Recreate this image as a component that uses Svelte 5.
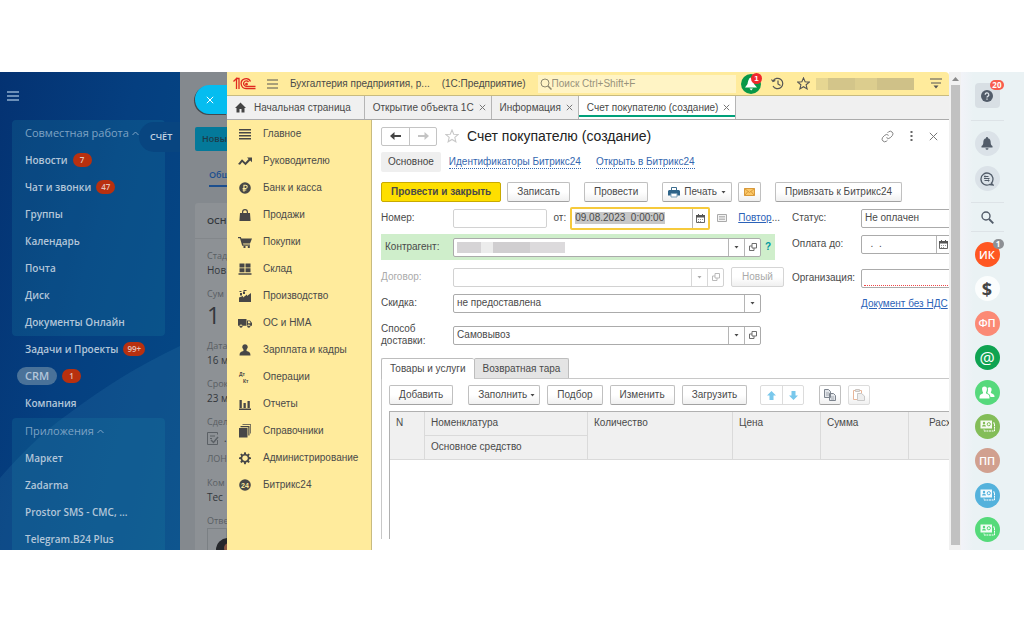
<script>
  const teamMenu = [
    { label: 'Новости', badge: '7' },
    { label: 'Чат и звонки', badge: '47' },
    { label: 'Группы' },
    { label: 'Календарь' },
    { label: 'Почта' },
    { label: 'Диск' },
    { label: 'Документы Онлайн' }
  ]

  const mainMenu = [
    { label: 'Задачи и Проекты', badge: '99+' },
    { label: 'CRM', badge: '1', active: true },
    { label: 'Компания' }
  ]

  const appsMenu = ['Маркет', 'Zadarma', 'Prostor SMS - СМС, ...', 'Telegram.B24 Plus']

  const sections = [
    { label: 'Главное', icon: 'M1 2h12v1.6H1zM1 5h12v1.6H1zM1 8h12v1.6H1zM1 11h12v1.6H1z' },
    { label: 'Руководителю', icon: 'M0 10 4 5.2 7.4 8.4 10.6 5 9 3.4H14V8.2L12.2 6.5 7.5 11.2 4.2 8 2 10.8Z' },
    { label: 'Банк и касса', icon: 'M7 1.2a5.8 5.8 0 1 0 0 11.6a5.8 5.8 0 1 0 0-11.6ZM5.4 3.8h2.3a2 2 0 0 1 0 4.1H6.5v.7h1.8v.9H6.5v1.2H5.4V9.5h-.8v-.9h.8v-.7h-.8V7h.8ZM6.5 4.8V7h1.1a1.1 1.1 0 0 0 0-2.2Z' },
    { label: 'Продажи', icon: 'M2 5h2V4a3 3 0 0 1 6 0v1h2l.6 8H1.4ZM5.2 5h3.6V4a1.8 1.8 0 0 0-3.6 0Z' },
    { label: 'Покупки', icon: 'M0 2h2.8l.6 1.5H14L12 8.5H5l.3 1H12v1.2H4.2L2 3.2H0ZM5.5 11h2v2h-2zM9.8 11h2v2h-2z' },
    { label: 'Склад', icon: 'M1.5 1.5h5v4h-5zM7.5 1.5h5v4h-5zM1.5 6.3h5v4h-5zM7.5 6.3h5v4h-5zM.5 11.2h13v1.6H.5z' },
    { label: 'Производство', icon: 'M1 13V8.5l4-1.5v1.5L9 5.5V7l4-3v9ZM2 4h2v2.5H2zM5 2.5h2V5H5zM1.5 2h2v1h-2zM5.5 1h3v1h-3z' },
    { label: 'ОС и НМА', icon: 'M0 3h8.5v6.8H0ZM9 4.5h3l2 2.5v2.8H9ZM10 5.3v1.9h2.7L11.6 5.3ZM3 8.6a1.6 1.6 0 1 0 .01 0ZM10.8 8.6a1.6 1.6 0 1 0 .01 0Z' },
    { label: 'Зарплата и кадры', icon: 'M7 1.2a2.8 2.8 0 0 1 1.7 5L8.5 8c2.5.6 4 1.5 4 4.5h-11c0-3 1.5-3.9 4-4.5l-.2-1.8A2.8 2.8 0 0 1 7 1.2Z' },
    { label: 'Операции', ledger: true },
    { label: 'Отчеты', icon: 'M1 11.5h12V13H1zM1.5 3h2.3v8H1.5zM5.5 6h2.3v5H5.5zM9.5 4h2.3v7H9.5z' },
    { label: 'Справочники', icon: 'M1 4h8.5v9.5H1ZM2.5 2h9v9.5h-1.2V3.2H2.5ZM4.5.3H13V9.5h-.7V1H4.5Z' },
    { label: 'Администрирование', icon: 'M6.2 1.2h1.6l.3 1.7 1.1.5 1.4-1 1.2 1.2-1 1.4.5 1.1 1.7.3v1.6l-1.7.3-.5 1.1 1 1.4-1.2 1.2-1.4-1-1.1.5-.3 1.7H6.2l-.3-1.7-1.1-.5-1.4 1-1.2-1.2 1-1.4-.5-1.1L1 8V6.4l1.7-.3.5-1.1-1-1.4 1.2-1.2 1.4 1 1.1-.5ZM7 4.4a2.8 2.8 0 1 0 .01 0Z' },
    { label: 'Битрикс24', round: '24' }
  ]

  const tabs = ['Открытие объекта 1С', 'Информация']

  const contacts = [
    { kind: 'text', text: 'ИК', color: '#ff5722', badge: '1' },
    { kind: 'dollar', color: '#fbfdfd' },
    { kind: 'text', text: 'ФП', color: '#fb8a75' },
    { kind: 'at', color: '#0fa351' },
    { kind: 'people', color: '#56d97c' },
    { kind: 'card', color: '#83bd58' },
    { kind: 'text', text: 'ПП', color: '#d1a08f' },
    { kind: 'card', color: '#54b2dc' },
    { kind: 'card', color: '#55da7a' }
  ]

  let contractor = ''
  let number = ''
  let date = '09.08.2023  0:00:00'
  let payUntil = '  .  .'
</script>

{#snippet calendar()}
  <svg width="9" height="9" viewBox="0 0 9 9"><path d="M.5 1.5h8v7h-8z" fill="#fff" stroke="#666" /><path d="M0 1h9v2.5H0zM2 0h1v2H2zM6 0h1v2H6z" fill="#555" /><path d="M2 5h1v1H2zM4 5h1v1H4zM6 5h1v1H6zM2 7h1v1H2zM4 7h1v1H4z" fill="#999" /></svg>
{/snippet}

{#snippet popout()}
  <svg class="soft" width="8" height="8" viewBox="0 0 8 8" fill="none" stroke="currentColor"><path d="M3 .5h4.5V5H3ZM3 3H.5v4.5H5V5" /></svg>
{/snippet}

{#snippet arrow()}
  <svg width="5" height="3" viewBox="0 0 5 3" fill="currentColor"><path d="M.5 0h4L2.5 2.5Z" /></svg>
{/snippet}

{#snippet cross()}
  <svg width="7" height="7" viewBox="0 0 7 7" stroke="#777" fill="none"><path d="m.8.8 5.4 5.4M6.2.8.8 6.2" /></svg>
{/snippet}

<div class="screen">
  <aside class="portal">
    <svg class="glow" viewBox="0 0 180 478" preserveAspectRatio="none">
      <path d="M0 406C30 372 50 355 67 343C105 314 140 293 180 274V478H0Z" fill="#4aa0c8" fill-opacity="0.13" />
    </svg>
    <button class="burger light" aria-label="Меню"><svg width="12" height="10" viewBox="0 0 12 10"><path d="M0 1h12M0 5h12M0 9h12" stroke="#8faed0" stroke-width="1.5" /></svg></button>
    <nav>
      <div class="panel">
        <a class="item heading" href="#team">Совместная работа <svg width="7" height="5" viewBox="0 0 7 5" fill="none" stroke="#7ea3c4"><path d="m.5 4 3-3 3 3" /></svg></a>
        {#each teamMenu as item}
          <a class="item" href="#menu">{item.label}{#if item.badge}<span class="badge">{item.badge}</span>{/if}</a>
        {/each}
      </div>
      {#each mainMenu as item}
        <a class="item outer" href="#menu"><span class:active={item.active}>{item.label}</span>{#if item.badge}<span class="badge">{item.badge}</span>{/if}</a>
      {/each}
      <div class="panel apps">
        <a class="item heading" href="#apps">Приложения <svg width="7" height="5" viewBox="0 0 7 5" fill="none" stroke="#7ea3c4"><path d="m.5 4 3-3 3 3" /></svg></a>
        {#each appsMenu as item}
          <a class="item" href="#menu">{item}</a>
        {/each}
      </div>
    </nav>
    <span class="invoice">СЧЁТ</span>
  </aside>

  <section class="deal">
    <button class="close-slider" aria-label="Закрыть"><svg width="8" height="8" viewBox="0 0 8 8" stroke="#fff"><path d="m.8.8 6.4 6.4M7.2.8.8 7.2" /></svg></button>
    <span class="stage">Новы</span>
    <a class="deal-tab" href="#general">Общ</a>
    <div class="deal-card">
      <h2>ОСН</h2>
      <dl>
        <dt>Стад</dt><dd>Нов</dd>
        <dt>Сум</dt><dd class="sum">1</dd>
        <dt>Дата</dt><dd>16 м</dd>
        <dt>Срок</dt><dd>23 м</dd>
        <dt>Сдел</dt>
        <dd class="doc"><svg width="12" height="13" viewBox="0 0 12 13" fill="none" stroke="#5b6065"><path d="M10.5 8v4.5H.5V.5h10v2M3 4h5M3 6.5h2" /><path d="m4 8 2.5 2.5L11 5" stroke-width="1.5" /></svg><span>.</span></dd>
        <dd class="firm">ЛОН</dd>
        <dt>Ком</dt><dd>Тес</dd>
        <dt>Отве</dt>
      </dl>
      <div class="person"><svg width="24" height="24" viewBox="0 0 24 24"><circle cx="12" cy="12" r="12" fill="#25272b" /><circle cx="13" cy="10" r="5" fill="#8a5742" /></svg></div>
    </div>
  </section>

  <main class="client">
    <header class="titlebar">
      <svg class="logo" width="23" height="13" viewBox="0 0 23 13" fill="none" stroke="#e02a20" stroke-width="1.3">
        <path d="M.5 4.500 3.500 1.500V12M3.500 1.500H6V12" />
        <path d="M17.5 4.500A4.900 4.900 0 1 0 13 11.500H22.500M15.500 5A2.700 2.700 0 1 0 13 9.300H22.500" />
        <path d="M13.500 6.300a.8.800 0 1 0 .01 0" />
      </svg>
      <button class="burger" aria-label="Главное меню"><svg width="11" height="10" viewBox="0 0 11 10"><path d="M0 1h11M0 5h11M0 9h11" stroke="#555" /></svg></button>
      <span class="base">Бухгалтерия предприятия, р...</span>
      <span class="product">(1С:Предприятие)</span>
      <label class="search">
        <svg width="12" height="12" viewBox="0 0 12 12" fill="none" stroke="#8d886f"><circle cx="5" cy="5" r="4" /><path d="m8 8 3.5 3.5" stroke-width="1.5" /></svg>
        <input type="search" placeholder="Поиск Ctrl+Shift+F" aria-label="Поиск" />
      </label>
      <button class="bell" aria-label="Уведомления">
        <svg width="20" height="20" viewBox="0 0 20 20"><circle cx="10" cy="10" r="10" fill="#089848" /><path d="M9.5 3.5c2 1 2.8 3.5 3.5 6.5l3 3.500H4L6.500 10C7 7.500 7.500 4.500 9.500 3.500ZM8.500 14.500h3.500L10.200 16.500Z" fill="#fff" /></svg>
        <span class="count">1</span>
      </button>
      <button aria-label="История"><svg width="13" height="13" viewBox="0 0 13 13" fill="none" stroke="#555" stroke-width="1.2"><path d="M2 4A5.2 5.2 0 1 1 2 9M.5 2.5 2 4.5 4.3 3.5M7 3.5V7l2.5 1.5" /></svg></button>
      <button aria-label="Избранное"><svg width="13" height="13" viewBox="0 0 13 13" fill="none" stroke="#555" stroke-width="1.1"><path d="M6.5.9 8.1 4.8l4.2.3-3.2 2.7 1 4.1-3.6-2.2-3.6 2.2 1-4.1L.7 5.1l4.2-.3Z" /></svg></button>
      <span class="user"></span>
      <button class="service" aria-label="Сервис"><svg width="12" height="11" viewBox="0 0 12 11"><path d="M0 1h12M1 5h10" stroke="#555" stroke-width="1.2" /><path d="M3.5 7.5h5L6 10.5Z" fill="#555" /></svg></button>
    </header>

    <div class="tabs">
      <a class="tab home" href="#home"><svg width="11" height="11" viewBox="0 0 11 11" fill="#444"><path d="M5.5.5 11 6H9.5v4.5h-3V7h-2v3.5h-3V6H0Z" /></svg>Начальная страница</a>
      {#each tabs as tab}
        <a class="tab" href="#tab">{tab}{@render cross()}</a>
      {/each}
      <a class="tab current" href="#invoice">Счет покупателю (создание){@render cross()}</a>
    </div>

    <div class="workspace">
      <nav class="sections">
        {#each sections as item}
          <a href="#section">
            <svg width="14" height="14" viewBox="0 0 14 14" fill="#474747" fill-rule="evenodd">
              {#if item.ledger}
                <text x="1" y="6" class="tiny">Дт</text>
                <text x="5" y="13" class="tiny">Кт</text>
              {:else if item.round}
                <circle cx="7" cy="7" r="5.8" />
                <text x="7" y="9.5" class="tiny white">{item.round}</text>
              {:else}
                <path d={item.icon} />
              {/if}
            </svg>
            {item.label}
          </a>
        {/each}
      </nav>

      <div class="content">
        <div class="head">
          <div class="joined history">
            <button aria-label="Назад"><svg width="12" height="8" viewBox="0 0 12 8"><path d="M4.5 0v3H11v2H4.5v3L0 4Z" fill="#444" /></svg></button>
            <button aria-label="Вперед" disabled><svg width="12" height="8" viewBox="0 0 12 8"><path d="M7.5 0v3H1v2h6.5v3L12 4Z" fill="#c4c4c4" /></svg></button>
          </div>
          <svg width="14" height="14" viewBox="0 0 13 13" fill="none" stroke="#c8c8c8"><path d="M6.5.9 8.1 4.8l4.2.3-3.2 2.7 1 4.1-3.6-2.2-3.6 2.2 1-4.1L.7 5.1l4.2-.3Z" /></svg>
          <h1>Счет покупателю (создание)</h1>
          <div class="tools">
            <button aria-label="Ссылка"><svg width="13" height="13" viewBox="0 0 24 24" fill="none" stroke="#808080" stroke-width="1.8"><path d="M10 14a5 5 0 0 0 7 .3l4-4a5 5 0 0 0-7-7l-2 2M14 10a5 5 0 0 0-7-.3l-4 4a5 5 0 0 0 7 7l2-2" /></svg></button>
            <button aria-label="Еще"><svg width="3" height="10" viewBox="0 0 3 10" fill="#666"><path d="M.5 0h2v2h-2zM.5 4h2v2h-2zM.5 8h2v2h-2z" /></svg></button>
            <button aria-label="Закрыть"><svg width="9" height="9" viewBox="0 0 9 9" stroke="#777"><path d="m.8.8 7.4 7.4M8.2.8.8 8.2" /></svg></button>
          </div>
        </div>

        <div class="links">
          <a class="chosen" href="#main">Основное</a>
          <a href="#ids">Идентификаторы Битрикс24</a>
          <a href="#open">Открыть в Битрикс24</a>
        </div>

        <div class="commands">
          <button class="btn primary">Провести и закрыть</button>
          <button class="btn">Записать</button>
          <button class="btn post">Провести</button>
          <button class="btn print"><svg width="12" height="12" viewBox="0 0 12 12"><path d="M3.5 1.5h5v3h-5Z" fill="#fff" stroke="#3d6d8f" /><path d="M1 4h10l1 1v4.5H0V5Z" fill="#2f6489" /><path d="M3 7.5h6v3.5H3z" fill="#fff" stroke="#7fa3bb" /></svg>Печать{@render arrow()}</button>
          <button class="btn mail" aria-label="Письмо"><svg width="11" height="8" viewBox="0 0 11 8"><path d="M.5.5h10v7H.5z" fill="#fbc868" stroke="#d9993a" /><path d="m.5.5 5 4 5-4M.5 7.5 4 3.5M10.5 7.5 7 3.5" fill="none" stroke="#d9993a" /></svg></button>
          <button class="btn">Привязать к Битрикс24</button>
        </div>

        <form class="form" on:submit|preventDefault>
          <div class="left">
            <div class="row first">
              <label for="number">Номер:</label>
              <input id="number" class="field pale" bind:value={number} />
              <label class="from" for="date">от:</label>
              <div class="field focused">
                <input id="date" bind:value={date} />
                <button type="button" class="end" aria-label="Календарь">{@render calendar()}</button>
              </div>
              <svg width="10" height="8" viewBox="0 0 10 8"><path d="M.5.5h9v7h-9z" fill="#f3f3f3" stroke="#aaa" /><path d="M2 2.5h6M2 4h6M2 5.5h6" stroke="#bbb" /></svg>
              <span class="repeat"><a href="#repeat">Повтор</a>...</span>
            </div>
            <div class="row green">
              <label for="contractor">Контрагент:</label>
              <div class="field">
                <input id="contractor" bind:value={contractor} />
                <span class="masked"><i></i><i></i><i></i><i></i></span>
                <button type="button" class="end" aria-label="Выбрать">{@render arrow()}</button>
                <button type="button" class="end" aria-label="Открыть">{@render popout()}</button>
              </div>
              <button type="button" class="help">?</button>
            </div>
            <div class="row disabled">
              <label for="contract">Договор:</label>
              <div class="field pale">
                <input id="contract" disabled />
                <button type="button" class="end" aria-label="Выбрать" disabled>{@render arrow()}</button>
                <button type="button" class="end" aria-label="Открыть" disabled>{@render popout()}</button>
              </div>
              <button type="button" class="btn new" disabled>Новый</button>
            </div>
            <div class="row short">
              <label for="discount">Скидка:</label>
              <div class="field">
                <select id="discount"><option>не предоставлена</option></select>
                <span class="end">{@render arrow()}</span>
              </div>
            </div>
            <div class="row short">
              <label for="delivery">Способ доставки:</label>
              <div class="field">
                <select id="delivery"><option>Самовывоз</option></select>
                <span class="end">{@render arrow()}</span>
                <button type="button" class="end" aria-label="Открыть">{@render popout()}</button>
              </div>
            </div>
          </div>

          <div class="right">
            <label for="status">Статус:</label>
            <div class="field"><select id="status"><option>Не оплачен</option></select></div>
            <label for="until">Оплата до:</label>
            <div class="field until">
              <input id="until" bind:value={payUntil} />
              <button type="button" class="end" aria-label="Календарь">{@render calendar()}</button>
            </div>
            <label for="org">Организация:</label>
            <div class="field required"><input id="org" /></div>
            <a class="vat" href="#vat">Документ без НДС</a>
          </div>
        </form>

        <div class="pages">
          <button class="page open">Товары и услуги</button>
          <button class="page">Возвратная тара</button>
        </div>
        <div class="goods">
          <div class="toolbar">
            <button class="btn">Добавить</button>
            <button class="btn fill">Заполнить{@render arrow()}</button>
            <button class="btn">Подбор</button>
            <button class="btn">Изменить</button>
            <button class="btn">Загрузить</button>
            <div class="joined move">
              <button aria-label="Вверх"><svg width="9" height="9" viewBox="0 0 9 9"><path d="M4.5 0 9 4.5H6.5V9h-4V4.5H0Z" fill="#79c8ec" /></svg></button>
              <button aria-label="Вниз"><svg width="9" height="9" viewBox="0 0 9 9"><path d="M4.5 9 0 4.5h2.5V0h4v4.5H9Z" fill="#79c8ec" /></svg></button>
            </div>
            <button class="btn square copy" aria-label="Копировать"><svg width="12" height="12" viewBox="0 0 12 12" fill="#e3e6ea" stroke="#7d848e"><path d="M.5.5h4l2 2v6h-6zM5.5 4.5h4l2 2v5h-6z" /><path d="M2 4h3M2 6h3M7 8h3M7 10h3" stroke="#a3a9b1" /></svg></button>
            <button class="btn square paste" aria-label="Вставить"><svg width="12" height="12" viewBox="0 0 12 12"><path d="M.5 1.5h8v9h-8z" fill="#fff" stroke="#e8b69a" /><path d="M2.5.5h4v2h-4z" fill="#e4e4e4" stroke="#cbc4c0" /><path d="M4.5 4.5h4l3 2.5v4.5h-7z" fill="#eee" stroke="#c9c9c9" /></svg></button>
          </div>
          <div class="grid">
            <table>
              <thead>
                <tr>
                  <th class="n" rowspan="2">N</th>
                  <th class="item-name">Номенклатура</th>
                  <th class="qty" rowspan="2">Количество</th>
                  <th class="money" rowspan="2">Цена</th>
                  <th class="money" rowspan="2">Сумма</th>
                  <th class="cost" rowspan="2">Расх</th>
                </tr>
                <tr><th>Основное средство</th></tr>
              </thead>
            </table>
          </div>
        </div>
      </div>
    </div>
  </main>

  <div class="scroll"><svg width="7" height="4" viewBox="0 0 7 4" fill="#8a8a8a"><path d="M0 4 3.5 0 7 4Z" /></svg><span></span></div>

  <aside class="rail">
    <button class="round help-box" aria-label="Помощь">
      <svg width="12" height="12" viewBox="0 0 12 12"><circle cx="6" cy="6" r="6" fill="#525c69" /><path d="M4.2 4.8a1.8 1.8 0 1 1 2.6 1.5Q6 6.7 6 7.5M6 8.5v1.3" fill="none" stroke="#dfe5ea" stroke-width="1.3" /></svg>
      <span class="count">20</span>
    </button>
    <div class="pair">
      <button class="round tone" aria-label="Уведомления"><svg width="12" height="13" viewBox="0 0 12 13" fill="#525c69"><path d="M6 0a1 1 0 0 1 1 1.2C9 1.7 9.7 3.4 9.7 5.5c0 2 .6 2.8 1.8 3.5v1.5H.5V9c1.2-.7 1.8-1.5 1.8-3.5C2.3 3.4 3 1.7 5 1.2A1 1 0 0 1 6 0ZM4.5 11.3h3a1.5 1.5 0 0 1-3 0Z" /></svg></button>
      <button class="round tone" aria-label="Чат"><svg width="14" height="14" viewBox="0 0 14 14" fill="none" stroke="#525c69"><path d="M11.3 11.2A6 6 0 1 0 9.500 12.500L13 13Z" stroke-width="1.3" /><path d="M4 4.500h4.500M4 6.500h5.500M4.500 8.500H9.500M5 3.500v2M8.500 7.500v2" /></svg></button>
    </div>
    <button class="find" aria-label="Поиск"><svg width="13" height="13" viewBox="0 0 13 13" fill="none" stroke="#525c69"><circle cx="5" cy="5" r="4" stroke-width="1.4" /><path d="m8 8 4.3 4.3" stroke-width="1.9" /></svg></button>
    <div class="contacts">
      {#each contacts as c}
        <button class="round" style="background: {c.color}" aria-label="Чат">
          {#if c.kind === 'text'}
            {c.text}
          {:else if c.kind === 'dollar'}
            <span class="dollar">$</span>
          {:else if c.kind === 'at'}
            <span class="at">@</span>
          {:else if c.kind === 'people'}
            <svg width="16" height="13" viewBox="0 0 16 13" fill="#fff"><path d="M5.5.5c1.8 0 2.6 1.3 2.4 3C7.7 5 7.2 6 6.9 6.5c0 1.2 1 1.3 2.3 1.9 1 .5 1.3 1.5 1.3 4H.5c0-2.5.3-3.5 1.3-4C3.1 7.800 4.100 7.700 4.100 6.500 3.800 6 3.300 5 3.100 3.500 2.900 1.800 3.700.5 5.500.5Z" /><path d="M10.500 1.200c1.600 0 2.300 1.200 2.100 2.700-.1 1-.5 1.800-.8 2.300 0 1 .8 1.200 2 1.700 1.300.5 1.600 1 1.700 3.100h-4.100c-.1-1.800-.7-2.700-2-3.300L8.300 7C9 5.500 9.300 3.500 8.700 2c.4-.5 1-.8 1.800-.8Z" /></svg>
          {:else}
            <svg width="15" height="12" viewBox="0 0 15 12"><path d="M13 3h1.5v8H4V9.5" fill="none" stroke="#fff" stroke-dasharray="2 .6" /><path d="M.5.5h11.5v8H.5Z" fill="#fff" fill-opacity=".92" /><circle cx="4" cy="3" r="1.2" fill={c.color} /><path d="M2 6.5c0-2.3 4-2.3 4 0Z" fill={c.color} /><circle cx="8.8" cy="4.2" r="1.6" fill="none" stroke={c.color} /></svg>
          {/if}
          {#if c.badge}<span class="count muted">{c.badge}</span>{/if}
        </button>
      {/each}
    </div>
  </aside>
</div>

<style>
  :global(body) {
    margin: 0;
    background: #fff;
  }

  .screen {
    box-sizing: border-box;
    display: flex;
    height: 100vh;
    padding: 72px 0;
    overflow: hidden;
    font-family: 'Liberation Sans', Arial, sans-serif;
    font-size: 10px;
    line-height: 12px;
    color: #4a4a4a;
  }

  .screen * {
    box-sizing: border-box;
  }

  button,
  input,
  select {
    margin: 0;
    padding: 0;
    border: none;
    background: none;
    font: inherit;
    color: inherit;
    outline: none;
    appearance: none;
  }

  a {
    color: inherit;
    text-decoration: none;
  }

  svg {
    flex: none;
    display: block;
  }

  /* left portal menu */
  .portal {
    position: relative;
    flex: 0 0 180px;
    padding: 0 15px 0 12px;
    overflow: hidden;
    background: linear-gradient(105deg, #043272 0%, #053f80 45%, #054a86 100%);
    font-family: 'Open Sans', sans-serif;
    font-weight: 600;
    color: #b3c6d9;
  }

  .glow {
    position: absolute;
    inset: 0;
    width: 100%;
    height: 100%;
  }

  .burger.light {
    display: flex;
    align-items: center;
    height: 48px;
    margin-left: -5px;
  }

  .portal nav {
    position: relative;
  }

  .panel {
    border-radius: 4px;
    background: rgba(30, 140, 170, 0.2);
  }

  .panel.apps {
    margin-top: 1px;
  }

  .item {
    display: flex;
    align-items: center;
    gap: 5px;
    height: 27px;
    padding: 0 0 1px 13px;
    white-space: nowrap;
  }

  .item.heading {
    gap: 3px;
    font-size: 11px;
    font-weight: 400;
    color: #7ea3c4;
  }

  .active {
    margin-left: -8px;
    padding: 3px 8px;
    border-radius: 10px;
    background: #4a7299;
    font-size: 11px;
  }

  .badge {
    min-width: 19px;
    padding: 0 4px;
    border-radius: 7px;
    background: #b8300f;
    font-size: 8px;
    line-height: 14px;
    text-align: center;
    color: #e5c5bd;
  }

  .invoice {
    position: absolute;
    top: 50px;
    right: 0;
    padding-left: 11px;
    width: 41px;
    border-radius: 15px 0 0 15px;
    background: #084580;
    font-size: 9px;
    line-height: 30px;
    color: #c3d2e0;
  }

  /* dimmed deal card */
  .deal {
    flex: 0 0 47px;
    padding: 13px 0 0 15px;
    overflow: hidden;
    background: #84898e;
    font-family: 'Open Sans', sans-serif;
    color: #33373c;
    white-space: nowrap;
  }

  .close-slider {
    display: flex;
    align-items: center;
    width: 100%;
    height: 29px;
    padding-left: 11px;
    border-radius: 15px 0 0 15px;
    background: #05bdf0;
    box-shadow: -1px 1px 0 #44494e;
  }

  .stage {
    display: block;
    margin: 13px 0;
    padding-left: 7px;
    border-radius: 2px 0 0 2px;
    background: #04799a;
    font-size: 9px;
    font-weight: 600;
    line-height: 24px;
    color: #1d3c4a;
  }

  .deal-tab {
    display: block;
    margin: 0 0 16px 14px;
    border-bottom: 2px solid #1c4f8e;
    font-size: 9px;
    font-weight: 600;
    line-height: 21px;
    color: #1c4f8e;
  }

  .deal-card {
    border-radius: 3px 0 0 0;
    background: #8d9195;
  }

  .deal-card h2 {
    margin: 0;
    padding-left: 12px;
    border-bottom: 1px solid #83878b;
    font-size: 9px;
    font-weight: 600;
    line-height: 35px;
  }

  dl {
    margin: 10px 0 0;
    padding-left: 12px;
  }

  dt {
    font-size: 9px;
    line-height: 14px;
    color: #595e63;
  }

  dd {
    margin: 0 0 10px;
    font-size: 10px;
    line-height: 14px;
  }

  .sum {
    font-size: 23px;
    line-height: 28px;
  }

  .doc {
    display: flex;
    align-items: center;
    gap: 5px;
    height: 18px;
    margin-bottom: 5px;
  }

  .firm {
    font-size: 9px;
    color: #595e63;
  }

  .person {
    margin-left: 12px;
    padding: 9px 8px;
    border: 1px solid #7b8084;
  }

  /* 1C client window */
  .client {
    flex: 1;
    min-width: 0;
    display: flex;
    flex-direction: column;
    overflow: hidden;
    background: #fff;
    border-radius: 0 4px 0 0;
  }

  .titlebar {
    display: flex;
    align-items: center;
    height: 24px;
    padding: 0 6px;
    border-bottom: 1px solid #c8bb80;
    background: #ffeb9c;
    white-space: nowrap;
  }

  .titlebar button {
    display: flex;
    margin-right: 13px;
  }

  .titlebar .burger {
    margin: 0 12px 0 11px;
  }

  .base {
    margin-right: 12px;
  }

  .search {
    display: flex;
    align-items: center;
    flex: 1;
    height: 18px;
    margin: 0 5px 0 12px;
    padding-left: 2px;
    background: #fff4c5;
  }

  .search input {
    flex: 1;
    min-width: 0;
  }

  .search input::placeholder {
    color: #98927b;
    opacity: 1;
  }

  .titlebar .bell {
    position: relative;
    margin-right: 10px;
  }

  .count {
    position: absolute;
    top: -1px;
    right: -1px;
    min-width: 11px;
    padding: 0 2px;
    border-radius: 6px;
    background: #f0282d;
    font-size: 8px;
    font-weight: 700;
    line-height: 11px;
    text-align: center;
    color: #fff;
  }

  .user {
    width: 98px;
    height: 12px;
    margin-left: -7px;
    background: linear-gradient(90deg, #e6d692 0 12%, #d3c58a 12% 40%, #dccd8e 40% 62%, #cfc188 62%);
  }

  .titlebar .service {
    margin: 0 0 0 16px;
    padding-right: 1px;
  }

  .tabs {
    display: flex;
    height: 24px;
    border-bottom: 1px solid #ababab;
    background: #f0f0f0;
  }

  .tab {
    display: flex;
    align-items: center;
    gap: 5px;
    padding: 0 5px 0 8px;
    border-right: 1px solid #b5b5b5;
    white-space: nowrap;
  }

  .tab.home {
    gap: 8px;
    padding-right: 13px;
  }

  .tab.current {
    background: #fff;
    box-shadow: inset 0 -2px 0 #fff, inset 0 -4px 0 #00a07a;
  }

  .workspace {
    flex: 1;
    min-height: 0;
    display: flex;
  }

  .sections {
    flex: 0 0 145px;
    border-right: 1px solid #c8bb80;
    background: #ffeb9c;
    overflow: hidden;
  }

  .sections a {
    display: flex;
    align-items: center;
    gap: 11px;
    height: 27px;
    padding-left: 11px;
    white-space: nowrap;
  }

  .tiny {
    font-size: 5px;
    font-weight: 700;
  }

  .tiny.white {
    font-size: 7px;
    fill: #ffeb9c;
    text-anchor: middle;
  }

  .content {
    flex: 1;
    min-width: 0;
    display: flex;
    flex-direction: column;
    padding: 5px 0 11px 9px;
    overflow: hidden;
  }

  .head {
    display: flex;
    align-items: center;
    gap: 8px;
    height: 22px;
  }

  h1 {
    margin: 0;
    font-size: 14px;
    font-weight: 400;
    line-height: 20px;
    color: #222;
  }

  .tools {
    display: flex;
    align-items: center;
    gap: 16px;
    margin: 0 11px 0 auto;
  }

  .joined {
    display: flex;
    height: 19px;
    border: 1px solid #c4c4c4;
    border-radius: 2px;
    background: #fff;
  }

  .joined button {
    display: flex;
    align-items: center;
    justify-content: center;
    width: 27px;
  }

  .joined button + button {
    border-left: 1px solid #c4c4c4;
  }

  .links {
    display: flex;
    align-items: center;
    gap: 15px;
    margin-top: 5px;
    color: #3467b0;
  }

  .links a {
    border-bottom: 1px dotted #3467b0;
  }

  .links .chosen {
    margin-right: -7px;
    padding: 0 7px;
    border: none;
    border-radius: 2px;
    background: #efefef;
    line-height: 20px;
    color: #444;
  }

  .commands {
    display: flex;
    gap: 6px;
    margin: 10px 0 4px;
  }

  .btn {
    display: flex;
    align-items: center;
    justify-content: center;
    gap: 5px;
    height: 20px;
    padding: 0 9px;
    border: 1px solid #c0c0c0;
    border-bottom-color: #a2a2a2;
    border-radius: 2px;
    background: linear-gradient(#fff 50%, #f0f0f0);
    white-space: nowrap;
  }

  .btn.primary {
    border-color: #c9aa00;
    background: #fedf00;
    font-weight: 700;
  }

  .post,
  .mail + .btn {
    margin-left: 8px;
  }

  .print {
    gap: 4px;
    margin-left: 8px;
    padding: 0 5px;
  }

  .mail {
    padding: 0 5px;
  }

  .form {
    display: flex;
    gap: 8px;
  }

  .left {
    flex: 1;
    min-width: 0;
    display: grid;
    grid-template: 24px 34px 26px 26px 38px / minmax(0, 1fr);
    align-items: center;
  }

  .row {
    display: flex;
    align-items: center;
    gap: 7px;
  }

  .row.first {
    padding-right: 4px;
  }

  .row > label:first-child {
    flex: 0 0 65px;
  }

  .row > .field {
    flex: 1;
    min-width: 0;
  }

  .field {
    display: flex;
    height: 19px;
    border: 1px solid #ababab;
    border-radius: 2px;
    background: #fff;
  }

  .field.pale {
    border-color: #d2d2d2;
  }

  .field input,
  .field select {
    flex: 1;
    min-width: 0;
    padding-left: 3px;
  }

  .row > .field.focused {
    flex: 0 0 140px;
    align-items: center;
    height: 23px;
    margin-left: -3px;
    border: 2px solid #f6ca3c;
  }

  .focused input {
    flex: 0 0 90px;
    height: 12px;
    margin-left: 3px;
    padding: 0;
    background: #c8c8c8;
  }

  .focused .end {
    height: 100%;
    margin-left: auto;
  }

  .end {
    flex: 0 0 16px;
    display: flex;
    align-items: center;
    justify-content: center;
    border-left: 1px solid #b5b5b5;
  }

  .soft {
    opacity: 0.8;
  }

  .repeat {
    margin-left: 4px;
    white-space: nowrap;
  }

  .repeat a,
  .vat {
    color: #2b62b8;
    text-decoration: underline;
  }

  .row.green {
    height: 26px;
    margin-right: 9px;
    padding-right: 4px;
    background: #cfeecb;
  }

  .green > label:first-child {
    padding-left: 4px;
  }

  .green .field {
    position: relative;
  }

  .masked {
    position: absolute;
    top: 3px;
    left: 3px;
    display: flex;
  }

  .masked i {
    width: 24px;
    height: 11px;
    background: #d6d4d6;
  }

  .masked i:nth-child(2) {
    width: 12px;
    background: #ececec;
  }

  .masked i:nth-child(3) {
    width: 37px;
    background: #d0ced0;
  }

  .masked i:nth-child(4) {
    width: 35px;
    background: #dcdadc;
  }

  .help {
    width: 6px;
    margin-left: -3px;
    font-weight: 700;
    color: #0097a0;
  }

  .disabled,
  .btn:disabled {
    color: #aaa;
  }

  .pale .end {
    border-color: #d8d8d8;
  }

  .btn.new {
    width: 53px;
    border-color: #d5d5d5;
  }

  .row.short {
    padding-right: 23px;
  }

  .right {
    flex: 0 0 157px;
    display: grid;
    grid-template: 24px 28px 40px 12px / 69px 110px;
    align-items: center;
    overflow: hidden;
  }

  .until .end {
    flex-basis: 34px;
    justify-content: flex-start;
    padding-left: 2px;
  }

  .required {
    padding: 0 2px 1px;
  }

  .required input {
    border-bottom: 1px dotted #f04848;
  }

  .vat {
    grid-column: 2;
    white-space: nowrap;
  }

  .pages {
    display: flex;
    margin-top: 4px;
  }

  .page {
    height: 20px;
    padding: 0 8px;
    border: 1px solid #bdbdbd;
    border-bottom: none;
    border-radius: 2px 2px 0 0;
    background: #e4e4e4;
  }

  .page.open {
    position: relative;
    height: 21px;
    margin-bottom: -1px;
    border-right: none;
    background: #fff;
  }

  .goods {
    flex: 1;
    display: flex;
    flex-direction: column;
    padding: 6px 0 0 7px;
    border: 1px solid #c8c8c8;
    border-width: 1px 0 0 1px;
  }

  .toolbar {
    display: flex;
    gap: 7px;
  }

  .fill {
    gap: 3px;
    margin-left: 8px;
    padding: 0 4px 0 9px;
  }

  .joined.move {
    height: 20px;
    margin: 0 8px 0 6px;
    border-color: #dcdcdc;
  }

  .move button {
    width: 21px;
  }

  .joined.move button + button {
    border-color: #dcdcdc;
  }

  .square {
    width: 22px;
    padding: 0;
  }

  .paste {
    border-color: #dcdcdc;
  }

  .grid {
    flex: 1;
    margin-top: 6px;
    border: 1px solid #b0b0b0;
    border-width: 1px 0 0 1px;
  }

  table {
    width: 100%;
    table-layout: fixed;
    border-collapse: separate;
    border-spacing: 0;
  }

  th {
    height: 24px;
    padding: 5px 0 6px 6px;
    border: 1px solid #dadada;
    border-width: 0 1px 1px 0;
    background: #f0f0f0;
    font-weight: 400;
    text-align: left;
    vertical-align: top;
    white-space: nowrap;
  }

  th.n {
    width: 35px;
  }

  th.item-name {
    width: 163px;
  }

  th.qty {
    width: 145px;
  }

  th.money {
    width: 88px;
  }

  th.cost {
    padding-left: 20px;
    border-right: none;
  }

  /* window scrollbar */
  .scroll {
    flex: 0 0 12px;
    display: flex;
    flex-direction: column;
    align-items: center;
    gap: 4px;
    padding: 5px 1px;
    background: #f1f1f1;
  }

  .scroll span {
    flex: 1;
    width: 9px;
    background: #c1c1c1;
  }

  /* right rail */
  .rail {
    flex: 0 0 63px;
    display: flex;
    flex-direction: column;
    align-items: center;
    padding: 11px 11px 8px 0;
    background: linear-gradient(90deg, #f2f3f8, #eaf2f4 20%);
  }

  .round {
    position: relative;
    display: flex;
    align-items: center;
    justify-content: center;
    width: 25px;
    height: 25px;
    border-radius: 50%;
    font-family: 'Open Sans', sans-serif;
    font-size: 11px;
    font-weight: 600;
    color: #fff;
  }

  .help-box {
    border-radius: 4px;
    background: #d8dfe4;
  }

  .rail .count {
    top: -3px;
    right: -4px;
    background: #f95c4e;
    line-height: 10px;
  }

  .rail .count.muted {
    background: #8d9094;
  }

  .pair {
    display: flex;
    flex-direction: column;
    align-items: center;
    gap: 10px;
    width: 33px;
    margin-top: 12px;
    padding: 10px 0 11px;
    border: 1px solid #dde3e7;
    border-width: 1px 0;
  }

  .tone {
    background: #dbe2e8;
  }

  .find {
    display: flex;
    align-items: center;
    justify-content: center;
    width: 33px;
    height: 29px;
    border-bottom: 1px solid #dde3e7;
  }

  .contacts {
    flex: 1;
    display: flex;
    flex-direction: column;
    justify-content: space-between;
    padding-top: 10px;
  }

  .dollar {
    font-size: 18px;
    font-weight: 700;
    color: #444;
  }

  .at {
    font-size: 17px;
    font-weight: 400;
  }
</style>
